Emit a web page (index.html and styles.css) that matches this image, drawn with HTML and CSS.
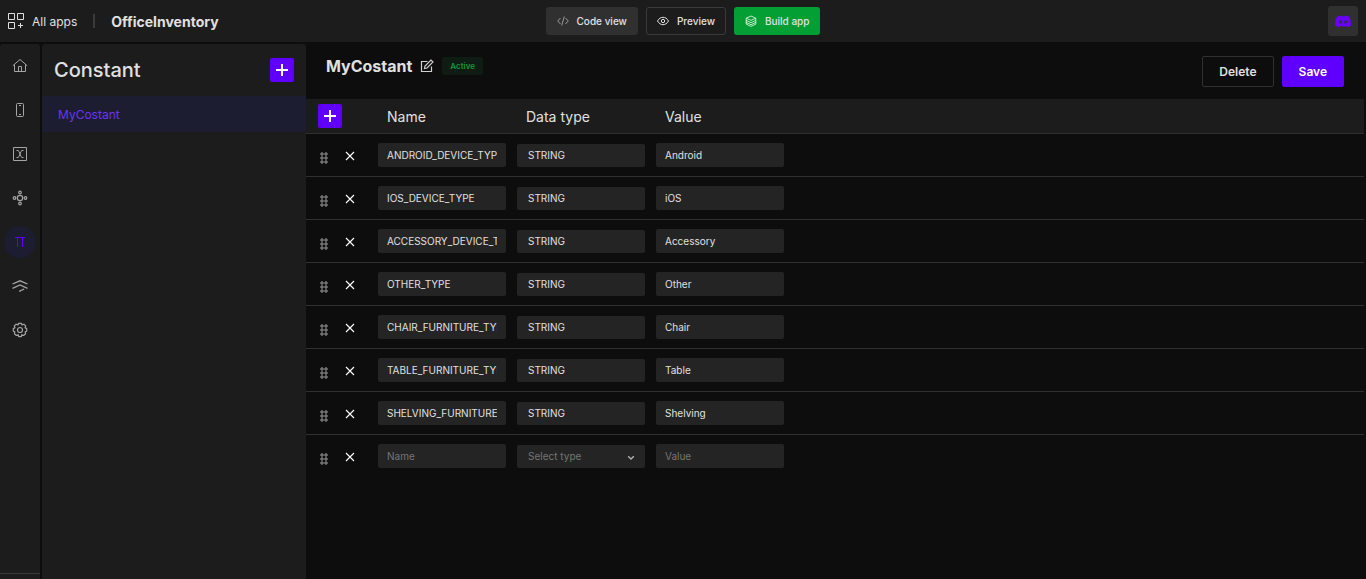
FILE: index.html
```html
<!DOCTYPE html>
<html lang="en">
<head>
  <meta charset="UTF-8">
  <meta name="viewport" content="width=device-width, initial-scale=1.0">
  <title>OfficeInventory</title>
  <link rel="stylesheet" href="styles.css">
</head>
<body>
  <!-- shared icons -->
  <svg class="icon-defs" aria-hidden="true">
    <symbol id="plus" viewBox="0 0 24 24"><path d="M12 6v12M6 12h12" stroke="#fff" stroke-width="2" fill="none"/></symbol>
    <symbol id="cross" viewBox="0 0 10 10"><path d="M1 1l8 8M9 1L1 9" stroke="#fff" stroke-width="1.1" fill="none"/></symbol>
    <symbol id="drag" viewBox="0 0 8 12">
      <g fill="none" stroke="#a5a5a5">
        <circle cx="2" cy="2" r="1.2"/><circle cx="6" cy="2" r="1.2"/>
        <circle cx="2" cy="6" r="1.2"/><circle cx="6" cy="6" r="1.2"/>
        <circle cx="2" cy="10" r="1.2"/><circle cx="6" cy="10" r="1.2"/>
      </g>
    </symbol>
  </svg>

  <header class="topbar">
    <div class="topbar-left">
      <a href="#" class="all-apps">
        <svg width="16" height="16" viewBox="0 0 16 16" fill="none" stroke="#e0e0e0">
          <path d="M.5.5h6v6h-6zM9.500.5h6v6h-6zM.5 9.500h6v6h-6zM12.500 10v5M10 12.500h5"/>
        </svg>
        All apps
      </a>
      <span class="divider"></span>
      <span class="app-name">OfficeInventory</span>
    </div>
    <div class="topbar-center">
      <button class="btn-top btn-code">
        <svg width="12" height="12" viewBox="0 0 12 12" fill="none" stroke="#9a9a9a"><path d="M3.500 3L.7 6l2.800 3M8.500 3l2.800 3-2.800 3M7.300 1.500l-2.600 9"/></svg>
        Code view
      </button>
      <button class="btn-top btn-preview">
        <svg width="12" height="12" viewBox="0 0 12 12" fill="none" stroke="#e0e0e0"><path d="M.5 6C2 3.400 3.800 2.300 6 2.300S10 3.400 11.500 6C10 8.600 8.200 9.700 6 9.700S2 8.600.5 6z"/><circle cx="6" cy="6" r="1.700"/></svg>
        Preview
      </button>
      <button class="btn-top btn-build">
        <svg width="12" height="12" viewBox="0 0 12 12" fill="none" stroke="#e8ffe8"><path d="M6 1l4.800 2.200L6 5.400 1.200 3.200zM1 5.300l5 2.400 5-2.400M1 7.300l5 2.400 5-2.400M1 9l5 2.400L11 9M1.200 3.200V9M10.800 3.200V9" stroke-width=".8"/></svg>
        Build app
      </button>
    </div>
    <div class="topbar-right">
      <a href="#" class="discord" aria-label="Discord">
        <svg width="16" height="13" viewBox="0 0 16 13"><path fill="#6a00ff" fill-rule="evenodd" d="M5.300.4L5.800 1.300Q8 1 10.200 1.300L10.700.4Q12.600.7 13.900 1.500Q16.200 5 15.900 10.200Q14.200 11.800 12.200 12.300L11.300 10.900Q8 11.700 4.700 10.900L3.800 12.300Q1.800 11.800.1 10.200Q-.2 5 2.100 1.500Q3.400.7 5.300.4zM5.400 5.200a1.500 1.700 0 1 0 .01 0zM10.600 5.200a1.500 1.700 0 1 0 .01 0z"/></svg>
      </a>
    </div>
  </header>

  <div class="layout">
    <nav class="rail">
      <a href="#" aria-label="Home"><svg width="16" height="16" viewBox="0 0 16 16"><path d="M.8 7.700L8 1.500l7.200 6.200M2.500 6.500v7.000h11V6.500M6.500 13.500V8.500h3v5"/></svg></a>
      <a href="#" aria-label="Screens"><svg width="16" height="16" viewBox="0 0 16 16"><rect x="4.500" y="1.500" width="7" height="13" rx="1"/><path d="M7 3.500h2M7 12.500h2"/></svg></a>
      <a href="#" aria-label="Variables"><svg width="16" height="16" viewBox="0 0 16 16"><path d="M1.500 1.500h13v13h-13zM4.500 4.500h1.500Q7 4.500 8 8t2 3.500h1.500M11.500 4.500H10Q9 4.500 8 8t-2 3.500H4.500"/></svg></a>
      <a href="#" aria-label="API"><svg width="16" height="16" viewBox="0 0 16 16" stroke-width="1.200"><circle cx="8" cy="8" r="2.700"/><circle cx="8" cy="2.500" r="1.300"/><circle cx="8" cy="13.500" r="1.300"/><circle cx="2.500" cy="8" r="1.300"/><circle cx="13.500" cy="8" r="1.300"/></svg></a>
      <a href="#" class="active" aria-label="Constants"><svg width="16" height="16" viewBox="0 0 16 16"><path d="M3 3.500h10M5.500 3.500v9.500M10.500 3.500v9.500"/></svg></a>
      <a href="#" aria-label="Layers"><svg width="16" height="16" viewBox="0 0 16 16"><path d="M.5 6L8 2.800 15.500 6M.5 10.300L8 7l7.500 3.300M7.200 13.300l5-2.300" stroke-width="1.300"/></svg></a>
      <a href="#" aria-label="Settings"><svg width="16" height="16" viewBox="0 0 16 16" stroke-width="1.200"><path d="M6 3L6.600 1.300h2.800L10 3l1.900-.8 1.900 1.900-.8 1.700 1.700.8v2.600l-1.500.6.400 2-2 1.700-1.800-.8-.5 2H6.700l-.5-2-1.800.8-2-1.700.4-2-1.500-.6V6.600L3 5.800l-.8-1.700 1.900-1.900z" stroke-linejoin="round"/><circle cx="8" cy="8" r="2.500"/></svg></a>
    </nav>

    <aside class="sidebar">
      <div class="sidebar-head">
        <h1>Constant</h1>
        <button class="btn-add" aria-label="Add constant"><svg width="24" height="24"><use href="#plus"/></svg></button>
      </div>
      <a href="#" class="sidebar-item">MyCostant</a>
    </aside>

    <main class="content">
      <div class="content-head">
        <h2>MyCostant</h2>
        <button class="btn-edit" aria-label="Rename">
          <svg width="14" height="14" viewBox="0 0 14 14" fill="none" stroke="#d0d0d0" stroke-width="1.200"><path d="M7.500 2.500h-6v10h10v-5M4.500 9.500l.5-2.500L11 1l2 2-6 6z"/></svg>
        </button>
        <span class="badge">Active</span>
        <div class="actions">
          <button class="btn-delete">Delete</button>
          <button class="btn-save">Save</button>
        </div>
      </div>

      <table class="constants">
        <thead>
          <tr>
            <th class="col-tools"><button class="btn-add" aria-label="Add row"><svg width="24" height="24"><use href="#plus"/></svg></button></th>
            <th class="col-field">Name</th>
            <th class="col-field">Data type</th>
            <th class="col-field">Value</th>
            <th></th>
          </tr>
        </thead>
        <tbody>
          <tr>
            <td><div class="tools"><svg class="drag" width="8" height="12"><use href="#drag"/></svg><button class="btn-remove" aria-label="Remove"><svg width="10" height="10"><use href="#cross"/></svg></button></div></td>
            <td><input type="text" aria-label="Name" value="ANDROID_DEVICE_TYPE"></td>
            <td><select aria-label="Data type"><option>STRING</option></select></td>
            <td><input type="text" aria-label="Value" value="Android"></td>
            <td></td>
          </tr>
          <tr>
            <td><div class="tools"><svg class="drag" width="8" height="12"><use href="#drag"/></svg><button class="btn-remove" aria-label="Remove"><svg width="10" height="10"><use href="#cross"/></svg></button></div></td>
            <td><input type="text" aria-label="Name" value="IOS_DEVICE_TYPE"></td>
            <td><select aria-label="Data type"><option>STRING</option></select></td>
            <td><input type="text" aria-label="Value" value="iOS"></td>
            <td></td>
          </tr>
          <tr>
            <td><div class="tools"><svg class="drag" width="8" height="12"><use href="#drag"/></svg><button class="btn-remove" aria-label="Remove"><svg width="10" height="10"><use href="#cross"/></svg></button></div></td>
            <td><input type="text" aria-label="Name" value="ACCESSORY_DEVICE_TYPE"></td>
            <td><select aria-label="Data type"><option>STRING</option></select></td>
            <td><input type="text" aria-label="Value" value="Accessory"></td>
            <td></td>
          </tr>
          <tr>
            <td><div class="tools"><svg class="drag" width="8" height="12"><use href="#drag"/></svg><button class="btn-remove" aria-label="Remove"><svg width="10" height="10"><use href="#cross"/></svg></button></div></td>
            <td><input type="text" aria-label="Name" value="OTHER_TYPE"></td>
            <td><select aria-label="Data type"><option>STRING</option></select></td>
            <td><input type="text" aria-label="Value" value="Other"></td>
            <td></td>
          </tr>
          <tr>
            <td><div class="tools"><svg class="drag" width="8" height="12"><use href="#drag"/></svg><button class="btn-remove" aria-label="Remove"><svg width="10" height="10"><use href="#cross"/></svg></button></div></td>
            <td><input type="text" aria-label="Name" value="CHAIR_FURNITURE_TYPE"></td>
            <td><select aria-label="Data type"><option>STRING</option></select></td>
            <td><input type="text" aria-label="Value" value="Chair"></td>
            <td></td>
          </tr>
          <tr>
            <td><div class="tools"><svg class="drag" width="8" height="12"><use href="#drag"/></svg><button class="btn-remove" aria-label="Remove"><svg width="10" height="10"><use href="#cross"/></svg></button></div></td>
            <td><input type="text" aria-label="Name" value="TABLE_FURNITURE_TYPE"></td>
            <td><select aria-label="Data type"><option>STRING</option></select></td>
            <td><input type="text" aria-label="Value" value="Table"></td>
            <td></td>
          </tr>
          <tr>
            <td><div class="tools"><svg class="drag" width="8" height="12"><use href="#drag"/></svg><button class="btn-remove" aria-label="Remove"><svg width="10" height="10"><use href="#cross"/></svg></button></div></td>
            <td><input type="text" aria-label="Name" value="SHELVING_FURNITURE_TYPE"></td>
            <td><select aria-label="Data type"><option>STRING</option></select></td>
            <td><input type="text" aria-label="Value" value="Shelving"></td>
            <td></td>
          </tr>
          <tr>
            <td><div class="tools"><svg class="drag" width="8" height="12"><use href="#drag"/></svg><button class="btn-remove" aria-label="Remove"><svg width="10" height="10"><use href="#cross"/></svg></button></div></td>
            <td><input type="text" aria-label="Name" placeholder="Name"></td>
            <td>
              <div class="select-wrap">
                <select class="empty" aria-label="Data type"><option>Select type</option><option>STRING</option></select>
                <svg class="chevron" width="8" height="6" viewBox="0 0 8 6" fill="none" stroke="#b0b0b0" stroke-width="1.400"><path d="M1.200 1.200L4 4l2.800-2.800"/></svg>
              </div>
            </td>
            <td><input type="text" aria-label="Value" placeholder="Value"></td>
            <td></td>
          </tr>
        </tbody>
      </table>
    </main>
  </div>
</body>
</html>
```
FILE: styles.css
```css
* {
  box-sizing: border-box;
}
body {
  margin: 0;
  min-height: 100vh;
  display: flex;
  flex-direction: column;
  gap: 2px;
  background: #0d0d0d;
  color: #e0e0e0;
  font-family: Inter, sans-serif;
  font-size: 12px;
}
a {
  color: inherit;
  text-decoration: none;
}
button, input, select {
  font-family: inherit;
}
button {
  cursor: pointer;
  padding: 0;
  border: none;
  background: none;
  color: inherit;
}
svg {
  display: block;
  flex: none;
}
.icon-defs {
  position: absolute;
  width: 0;
  height: 0;
}

/* top bar */
.topbar {
  display: grid;
  grid-template-columns: 1fr auto 1fr;
  align-items: center;
  height: 42px;
  padding: 0 8px;
  background: #1c1c1c;
}
.topbar-left, .topbar-center, .all-apps {
  display: flex;
  align-items: center;
}
.topbar-center {
  gap: 8px;
}
.all-apps {
  gap: 8px;
}
.divider {
  width: 2px;
  height: 14px;
  margin: 0 16px;
  background: #3a3a3a;
}
.app-name {
  font-size: 14px;
  font-weight: 700;
}
.btn-top {
  display: flex;
  align-items: center;
  gap: 8px;
  height: 28px;
  padding: 0 10px;
  border: 1px solid transparent;
  border-radius: 3px;
  font-size: 10px;
  font-weight: 500;
}
.btn-code {
  background: #303030;
}
.btn-preview {
  border-color: #3a3a3a;
}
.btn-build {
  background: #039f35;
}
.topbar-right {
  display: flex;
  justify-content: flex-end;
}
.discord {
  display: flex;
  align-items: center;
  justify-content: center;
  width: 30px;
  height: 30px;
  border-radius: 3px;
  background: #303030;
}

/* page body */
.layout {
  flex: 1;
  display: flex;
}
.rail {
  display: flex;
  flex-direction: column;
  align-items: center;
  gap: 12px;
  width: 40px;
  margin-right: 2px;
  padding-top: 6px;
  border-radius: 3px 3px 0 0;
  background: #1c1c1c;
}
.rail::after {
  content: "";
  width: 100%;
  height: 1px;
  margin: auto 0 5px;
  background: #3a3a3a;
}
.rail a {
  display: flex;
  align-items: center;
  justify-content: center;
  width: 32px;
  height: 32px;
  border-radius: 50%;
}
.rail svg {
  fill: none;
  stroke: #a5a5a5;
}
.rail .active {
  background: #1c1d31;
}
.rail .active svg {
  stroke: #5f00ff;
}
.sidebar {
  width: 264px;
  border-radius: 3px 3px 0 0;
  background: #1c1c1c;
}
.sidebar-head {
  display: flex;
  align-items: center;
  justify-content: space-between;
  height: 52px;
  padding: 0 12px;
}
.sidebar-head h1 {
  margin: 0;
  font-size: 20px;
  font-weight: 500;
}
.btn-add {
  display: block;
  width: 24px;
  height: 24px;
  border-radius: 2px;
  background: #5f00ff;
}
.sidebar-item {
  display: flex;
  align-items: center;
  height: 36px;
  padding: 0 16px;
  background: #1c1d31;
  color: #6a35f0;
}

/* main */
.content {
  flex: 1;
  min-width: 0;
  padding-right: 2px;
}
.content-head {
  display: flex;
  align-items: flex-start;
  height: 55px;
  padding: 12px 20px;
}
.content-head h2 {
  margin: 0;
  font-size: 16px;
  font-weight: 700;
  line-height: 20px;
}
.btn-edit {
  margin: 3px 8px;
}
.badge {
  margin-top: 1px;
  padding: 0 8px;
  border-radius: 2px;
  background: #0f1c13;
  color: #0b9a3a;
  font-size: 8px;
  font-weight: 600;
  line-height: 18px;
}
.actions {
  display: flex;
  gap: 8px;
  margin-left: auto;
}
.actions button {
  height: 31px;
  padding: 0 16px;
  border: 1px solid #303030;
  border-radius: 2px;
  font-size: 12px;
  font-weight: 600;
}
.actions .btn-save {
  border-color: #5f00ff;
  background: #5f00ff;
  color: #fff;
}

.constants {
  width: 100%;
  table-layout: fixed;
  border-spacing: 0;
}
.constants th {
  height: 35px;
  padding: 0 15px;
  border-bottom: 1px solid #303030;
  background: #1c1c1c;
  font-size: 14px;
  font-weight: 400;
  text-align: left;
}
.constants .col-tools {
  width: 66px;
  padding: 0 12px;
}
.col-field {
  width: 139px;
}
.constants td {
  height: 43px;
  padding: 0 5px 0 6px;
  border-bottom: 1px solid #303030;
}
.constants tr:last-child td {
  border-bottom-color: transparent;
}
.tools {
  display: flex;
  align-items: center;
  gap: 17px;
  padding: 2px 0 0 8px;
}
.drag {
  margin-top: 4px;
}
.constants input, .constants select {
  display: block;
  width: 100%;
  height: 24px;
  padding: 0 9px;
  border: none;
  border-radius: 2px;
  background: #242424;
  color: #e0e0e0;
  font-size: 10px;
}
.constants select {
  appearance: none;
  height: 23px;
  padding: 0 11px;
}
.constants input::placeholder {
  color: #757575;
}
.constants .empty {
  color: #757575;
}
.select-wrap {
  position: relative;
}
.chevron {
  position: absolute;
  top: 10px;
  right: 10px;
  pointer-events: none;
}
```
